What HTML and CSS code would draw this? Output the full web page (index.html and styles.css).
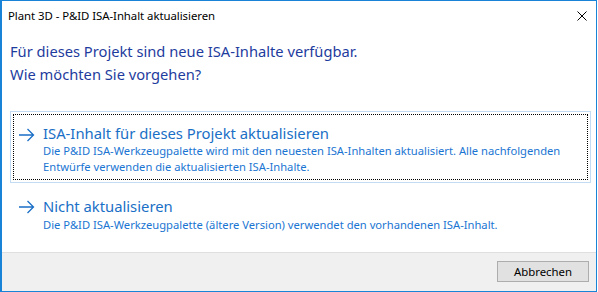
FILE: index.html
```html
<!DOCTYPE html>
<html lang="de">
<head>
<meta charset="utf-8">
<title>Plant 3D - P&amp;ID ISA-Inhalt aktualisieren</title>
<link rel="stylesheet" href="styles.css">
</head>
<body>
<div class="window">
  <div class="titlebar">
    <span class="title">Plant 3D - P&amp;ID ISA-Inhalt aktualisieren</span>
    <span class="close" aria-label="Schließen">
      <svg width="10" height="10" viewBox="0 0 10 10"><path d="M0.5 0.5 L9.5 9.5 M9.5 0.5 L0.5 9.5" stroke="#000" stroke-width="1" fill="none"/></svg>
    </span>
  </div>
  <div class="content">
    <div class="instruction">Für dieses Projekt sind neue ISA-Inhalte verfügbar.<br>Wie möchten Sie vorgehen?</div>
    <div class="links">
      <div class="link focused">
        <div class="focus">
          <svg class="arrow" width="17" height="14" viewBox="0 0 17 14"><path d="M1 7 H15.5 M9.5 1 L15.5 7 L9.5 13" stroke="#1a6fc6" stroke-width="1.3" fill="none"/></svg>
          <div class="text">
            <div class="link-title">ISA-Inhalt für dieses Projekt aktualisieren</div>
            <div class="link-desc">Die P&amp;ID ISA-Werkzeugpalette wird mit den neuesten ISA-Inhalten aktualisiert. Alle nachfolgenden Entwürfe verwenden die aktualisierten ISA-Inhalte.</div>
          </div>
        </div>
      </div>
      <div class="link">
        <div class="focus plain">
          <svg class="arrow" width="17" height="14" viewBox="0 0 17 14"><path d="M1 7 H15.5 M9.5 1 L15.5 7 L9.5 13" stroke="#1a6fc6" stroke-width="1.3" fill="none"/></svg>
          <div class="text">
            <div class="link-title">Nicht aktualisieren</div>
            <div class="link-desc">Die P&amp;ID ISA-Werkzeugpalette (ältere Version) verwendet den vorhandenen ISA-Inhalt.</div>
          </div>
        </div>
      </div>
    </div>
  </div>
  <div class="footer">
    <button class="btn">Abbrechen</button>
  </div>
</div>
</body>
</html>
```
FILE: styles.css
```css
html, body {
  margin: 0;
  padding: 0;
  background: #ffffff;
}
body {
  font-family: "Noto Sans", "Open Sans", sans-serif;
  width: 598px;
  height: 292px;
  overflow: hidden;
}
.window {
  box-sizing: border-box;
  width: 597px;
  height: 292px;
  border: 1px solid #1883d7;
  border-left-width: 2px;
  display: flex;
  flex-direction: column;
  background: #fff;
}
.titlebar {
  height: 29px;
  display: flex;
  align-items: center;
  justify-content: space-between;
  padding-left: 6px;
  padding-right: 9px;
}
.title {
  font-size: 11.4px;
  color: #000;
  letter-spacing: -0.05px;
}
.close {
  display: flex;
  width: 10px;
  height: 10px;
}
.content {
  flex: 1;
  padding: 10px 6px 0 8px;
}
.instruction {
  font-size: 14.7px;
  line-height: 23px;
  color: #1e3c9e;
}
.links {
  margin-top: 25px;
  display: flex;
  flex-direction: column;
  gap: 8px;
}
.link {
  box-sizing: border-box;
  width: 581px;
  padding: 2px;
  border: 1px solid transparent;
}
.link.focused {
  border-color: #c3dcf3;
  height: 72px;
}
.focus {
  box-sizing: border-box;
  height: 100%;
  border: 1px dotted #000;
  display: flex;
  align-items: flex-start;
  padding: 8px 4px 0 4px;
  gap: 8px;
}
.focus.plain {
  border-color: transparent;
  padding-top: 0;
}
.arrow {
  margin-top: 5px;
  flex: none;
}
.link-title {
  font-size: 14.8px;
  line-height: 20px;
  color: #1a6fc6;
}
.link-desc {
  font-size: 11.2px;
  line-height: 16px;
  color: #1a75d2;
}
.focus.plain .link-title {
  line-height: 22px;
}
.footer {
  height: 38px;
  background: #f0f0f0;
  border-top: 1px solid #dfdfdf;
  display: flex;
  justify-content: flex-end;
  align-items: center;
  padding-right: 7px;
}
.btn {
  box-sizing: border-box;
  width: 92px;
  height: 21px;
  background: #e1e1e1;
  border: 1px solid #adadad;
  font-family: "Noto Sans", "Open Sans", sans-serif;
  font-size: 11.4px;
  color: #000;
  padding: 0;
  margin-bottom: 1px;
}
```
